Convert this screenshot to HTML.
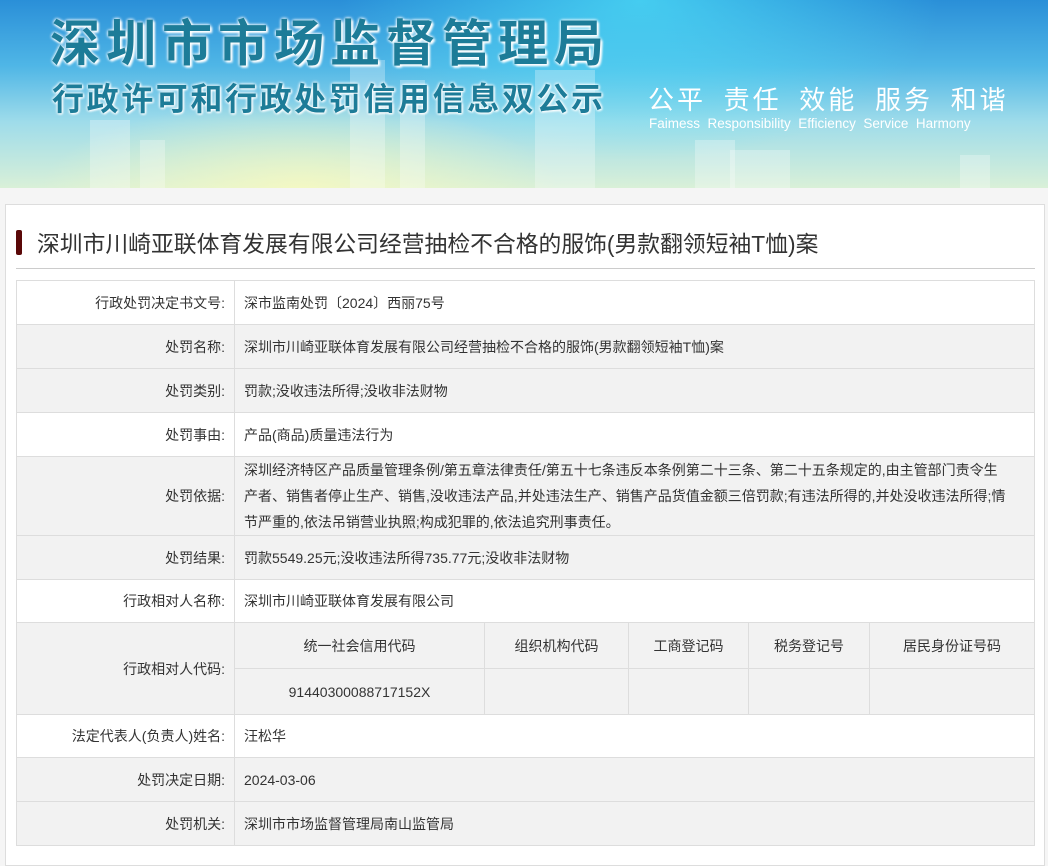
<!DOCTYPE html>
<html><head><meta charset="utf-8"><style>
body{margin:0;background:#f5f5f5;font-family:"Liberation Sans","Noto Sans CJK SC",sans-serif;color:#333;width:1048px;height:850px;overflow:hidden;position:relative}
.banner{position:absolute;left:0;top:0;width:1048px;height:188px;overflow:hidden;
background:linear-gradient(180deg,#2a8fd8 0%,#4fb6e6 35%,#9fdcea 65%,#d9f0d8 100%)}
.glow{position:absolute;left:0;top:0;width:1048px;height:188px;background:radial-gradient(ellipse 300px 160px at 640px 0px,rgba(80,230,250,.7),rgba(80,230,250,0)),radial-gradient(ellipse 260px 90px at 300px 190px,rgba(250,250,190,.8),rgba(250,250,190,0))}
.bld{position:absolute;background:rgba(255,255,255,.28)}
.t1{position:absolute;left:50px;top:4px;font-size:50px;font-weight:bold;color:#1d7c98;letter-spacing:6px;text-shadow:0 0 3px #fff,0 0 3px #fff,2px 2px 2px #fff;font-family:"Noto Sans CJK SC",sans-serif}
.t2{position:absolute;left:52px;top:74px;font-size:32px;font-weight:bold;color:#1d7c98;letter-spacing:2.6px;text-shadow:0 0 3px #fff,0 0 3px #fff,1px 1px 2px #fff;font-family:"Noto Sans CJK SC",sans-serif}
.t3{position:absolute;left:648px;top:80px;font-size:26px;color:#fff;letter-spacing:3px;font-family:"Noto Sans CJK SC",sans-serif;white-space:pre}
.t4{position:absolute;left:649px;top:116px;font-size:13.5px;color:#fff;white-space:pre}
.box{position:absolute;left:5px;top:204px;width:1038px;height:660px;background:#fff;border:1px solid #ddd}
.title{position:absolute;left:16px;top:229px;height:28px}
.bar{position:absolute;left:0;top:1px;width:6px;height:25px;background:#5a0808;border-radius:2px}
.title span{position:absolute;left:21px;top:-3px;font-size:22.8px;white-space:nowrap;color:#333}
.sep{position:absolute;left:16px;top:268px;width:1019px;height:1px;background:#ccc}
table{position:absolute;left:16px;top:280px;width:1019px;border-collapse:collapse;font-size:14px;table-layout:fixed}
td{border:1px solid #ddd;padding:0 9px;color:#333}
td.l{text-align:right;width:199px}
.g td{background:#f2f2f2}
.sub{width:100%;border-collapse:collapse;position:static}
.sub td{text-align:center;height:45px;border-top:none;border-left:none;background:#f2f2f2}
</style></head><body>
<div class="banner">
<div class="glow"></div>
<div class="bld" style="left:90px;top:120px;width:40px;height:68px"></div>
<div class="bld" style="left:140px;top:140px;width:25px;height:48px"></div>
<div class="bld" style="left:350px;top:60px;width:35px;height:128px"></div>
<div class="bld" style="left:400px;top:80px;width:25px;height:108px"></div>
<div class="bld" style="left:535px;top:70px;width:60px;height:118px"></div>
<div class="bld" style="left:695px;top:140px;width:40px;height:48px"></div>
<div class="bld" style="left:730px;top:150px;width:60px;height:38px"></div>
<div class="bld" style="left:960px;top:155px;width:30px;height:33px"></div>
<div class="t1">深圳市市场监督管理局</div>
<div class="t2">行政许可和行政处罚信用信息双公示</div>
<div class="t3">公平  责任  效能  服务  和谐</div>
<div class="t4">Faimess  Responsibility  Efficiency  Service  Harmony</div>
</div>
<div class="box"></div>
<div class="title"><div class="bar"></div><span>深圳市川崎亚联体育发展有限公司经营抽检不合格的服饰(男款翻领短袖T恤)案</span></div>
<div class="sep"></div>
<table>
<tr style="height:44px"><td class="l">行政处罚决定书文号:</td><td>深市监南处罚〔2024〕西丽75号</td></tr>
<tr class="g" style="height:44px"><td class="l">处罚名称:</td><td>深圳市川崎亚联体育发展有限公司经营抽检不合格的服饰(男款翻领短袖T恤)案</td></tr>
<tr class="g" style="height:44px"><td class="l">处罚类别:</td><td>罚款;没收违法所得;没收非法财物</td></tr>
<tr style="height:44px"><td class="l">处罚事由:</td><td>产品(商品)质量违法行为</td></tr>
<tr class="g" style="height:78px"><td class="l">处罚依据:</td><td style="line-height:26px;padding-right:2px">深圳经济特区产品质量管理条例/第五章法律责任/第五十七条违反本条例第二十三条、第二十五条规定的,由主管部门责令生<br>产者、销售者停止生产、销售,没收违法产品,并处违法生产、销售产品货值金额三倍罚款;有违法所得的,并处没收违法所得;情<br>节严重的,依法吊销营业执照;构成犯罪的,依法追究刑事责任。</td></tr>
<tr class="g" style="height:44px"><td class="l">处罚结果:</td><td>罚款5549.25元;没收违法所得735.77元;没收非法财物</td></tr>
<tr style="height:43px"><td class="l">行政相对人名称:</td><td>深圳市川崎亚联体育发展有限公司</td></tr>
<tr class="g" style="height:92px"><td class="l">行政相对人代码:</td><td style="padding:0">
<table class="sub"><tr><td style="width:231px">统一社会信用代码</td><td style="width:125px">组织机构代码</td><td style="width:101px">工商登记码</td><td style="width:102px">税务登记号</td><td style="border-right:none">居民身份证号码</td></tr>
<tr><td style="border-bottom:none">91440300088717152X</td><td style="border-bottom:none"></td><td style="border-bottom:none"></td><td style="border-bottom:none"></td><td style="border-bottom:none;border-right:none"></td></tr></table>
</td></tr>
<tr style="height:43px"><td class="l">法定代表人(负责人)姓名:</td><td>汪松华</td></tr>
<tr class="g" style="height:44px"><td class="l">处罚决定日期:</td><td>2024-03-06</td></tr>
<tr class="g" style="height:44px"><td class="l">处罚机关:</td><td>深圳市市场监督管理局南山监管局</td></tr>
</table>
</body></html>
